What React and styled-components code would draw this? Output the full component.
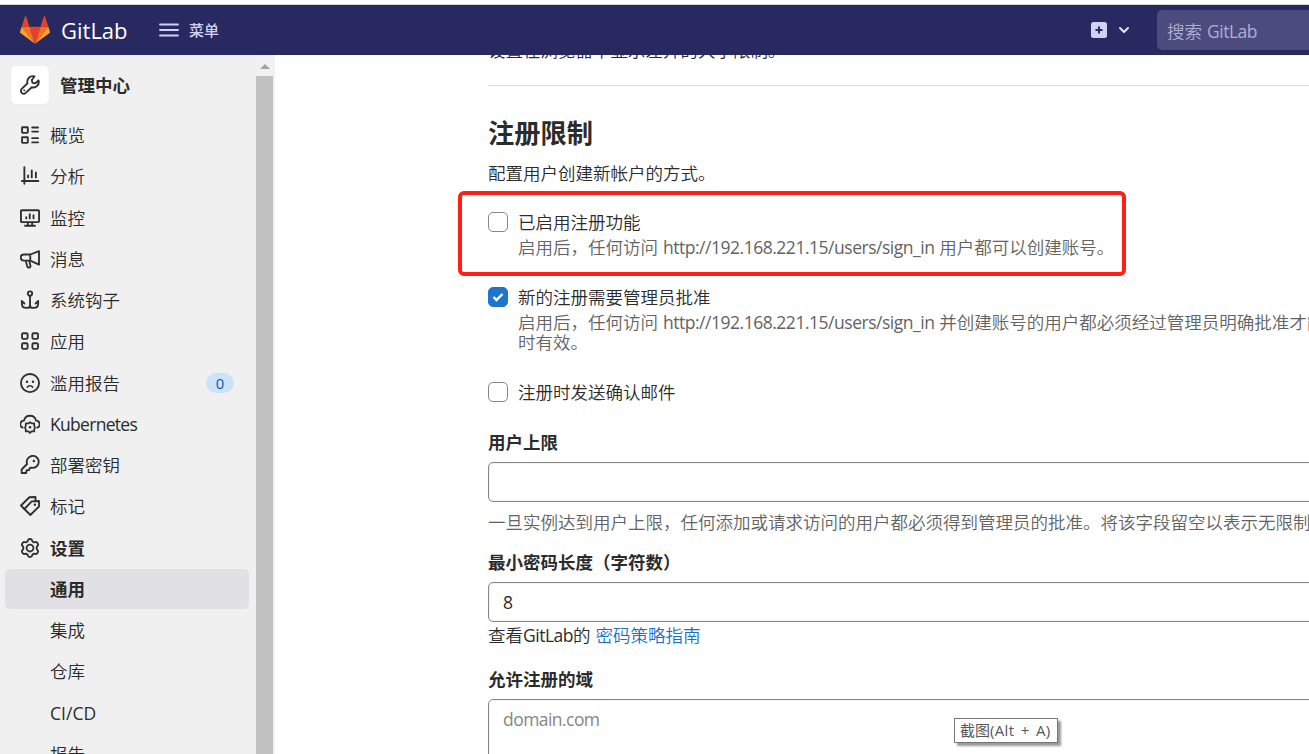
import React from "react";
import styled, { createGlobalStyle, css } from "styled-components";

const GlobalStyle = createGlobalStyle`
  *, *::before, *::after { box-sizing: border-box; }
  html, body { margin: 0; padding: 0; overflow: hidden; }
  body {
    background: #fff;
    color: #2b2b2b;
    font-family: "Open Sans", "Noto Sans CJK SC", sans-serif;
    font-size: 17.5px;
    font-weight: 350;
    line-height: 20px;
    word-spacing: 0.4px;
  }
`;

const Page = styled.div`
  display: flex;
  flex-direction: column;
  position: relative;
  width: 1309px;
  height: 754px;
  overflow: hidden;
`;

const Header = styled.header`
  display: flex;
  align-items: center;
  flex: none;
  height: 51px;
  margin-top: 4px;
  padding-left: 20px;
  background: #292961;
  border-top: 1px solid #d4d4d8;
  color: #d1d1f0;
`;

const Brand = styled.div`
  display: flex;
  align-items: center;
  gap: 11px;
  width: 139px;
  color: #fff;
  font-size: 22px;
  line-height: 30px;
  white-space: nowrap;
`;

const Menu = styled.div`
  display: flex;
  align-items: center;
  gap: 10px;
  flex: 1;
  font-size: 15px;
  font-weight: 500;
`;

const Create = styled.div`
  display: flex;
  align-items: center;
  gap: 11px;
  width: 66px;
`;

const Search = styled.div`
  flex: none;
  width: 152px;
  height: 40px;
  padding: 11px 0 0 10px;
  border-radius: 5px 0 0 5px;
  background: #4c4b7d;
  color: #aeaed2;
  white-space: nowrap;
`;

const Latin = styled.span`
  font-weight: 400;
  letter-spacing: ${(p) => p.$tracking || "-0.48px"};
`;

const Body = styled.div`
  display: flex;
  flex: 1;
  min-height: 0;
`;

const Sidebar = styled.aside`
  display: flex;
  flex: none;
  width: 275px;
  background: #f0f0f0;
  overflow: hidden;
`;

const Nav = styled.nav`
  width: 256px;
  flex: none;
`;

const Context = styled.div`
  display: flex;
  align-items: center;
  gap: 11px;
  height: 38px;
  margin: 11px 0 11px 11px;
  font-weight: 700;
`;

const ContextIcon = styled.div`
  display: grid;
  place-items: center;
  width: 38px;
  height: 38px;
  border-radius: 5px;
  background: #fff;
  box-shadow: 0 0 0 1px #ececec;
`;

const Item = styled.div`
  display: flex;
  align-items: center;
  gap: 10px;
  width: 244px;
  height: 40px;
  margin: 0 0 1.25px 5px;
  padding: 0 15px;
  border-radius: 5px;
  white-space: nowrap;
  ${(p) => p.$sub && css`padding-left: 45px;`}
  ${(p) => p.$bold && css`font-weight: 700;`}
  ${(p) => p.$active && css`background: #e1e0e5;`}
`;

const Badge = styled.span`
  margin-left: auto;
  width: 28px;
  height: 20px;
  border-radius: 10px;
  background: #cbe2f9;
  color: #0b5cad;
  font-size: 15px;
  font-weight: 400;
  text-align: center;
`;

const Scrollbar = styled.div`
  display: flex;
  flex-direction: column;
  align-items: center;
  width: 17px;
  background: #f1f1f1;
`;

const ArrowUp = styled.div`
  margin: 9px 0 7px;
  border: 5px solid transparent;
  border-top: 0;
  border-bottom-color: #a3a3a3;
`;

const Thumb = styled.div`
  width: 17px;
  flex: 1;
  background: #c1c1c1;
`;

const Content = styled.main`
  flex: 1;
  min-width: 0;
  padding-left: 213px;
  overflow: hidden;
  white-space: nowrap;
`;

const Previous = styled.div`
  display: flow-root;
  height: 31px;
  border-bottom: 1px solid #dbdbdb;

  p { margin: -15px 0 0; }
`;

const Title = styled.h4`
  margin: 32px 0 0;
  font-size: 26.25px;
  font-weight: 700;
  line-height: 30px;
`;

const Intro = styled.p`
  margin: 15px 0 29px;
`;

const Option = styled.div`
  display: flex;
  gap: 10px;
  height: ${(p) => p.$height}px;
`;

const Box = styled.span`
  display: grid;
  place-items: center;
  flex: none;
  width: 20px;
  height: 20px;
  border: 1px solid ${(p) => (p.$checked ? "#1f75cb" : "#868686")};
  border-radius: 5px;
  background: ${(p) => (p.$checked ? "#1f75cb" : "#fff")};
`;

const Help = styled.div`
  color: #636363;
  margin-top: ${(p) => p.$top || 0}px;
`;

const Label = styled.div`
  font-weight: 700;
  height: 20px;
  margin-bottom: 10px;
`;

const Field = styled.div`
  width: 1100px;
  height: ${(p) => p.$height || 40}px;
  padding: 9px 14px;
  border: 1px solid #868686;
  border-radius: 5px;
  box-shadow: inset 0 0 0 1px #f4f4f4;
  color: ${(p) => (p.$placeholder ? "#868686" : "#2b2b2b")};
`;

const Group = styled.div`
  margin-bottom: ${(p) => p.$gap}px;
`;

const Hint = styled.div`
  margin-top: 3px;
`;

const Link = styled.a`
  color: #1a70c6;
`;

const Highlight = styled.div`
  position: absolute;
  left: 458px;
  top: 191px;
  width: 668px;
  height: 85px;
  border: 4px solid #ff1f14;
  border-radius: 6px;
`;

const Tooltip = styled.div`
  position: absolute;
  left: 954px;
  top: 718px;
  width: 104px;
  height: 25px;
  padding-left: 5px;
  border: 1px solid #767676;
  background: #fff;
  box-shadow: 3px 3px 2px #9a9a9a;
  color: #575757;
  font-size: 15px;
  font-weight: 400;
  line-height: 23px;
  white-space: nowrap;
  word-spacing: 2px;
`;

const Svg = styled.svg`
  display: block;
  flex: none;
  fill: none;
  stroke: #303030;
  stroke-width: 1.5;
  stroke-linecap: round;
  stroke-linejoin: round;

  .solid { fill: #303030; stroke: none; }
`;

const shapes = {
  overview: (
    <>
      <rect x="1.65" y="1.75" width="4.6" height="4.5" rx=".4" />
      <rect x="1.65" y="9.75" width="4.6" height="4.5" rx=".4" />
      <path d="M9.75 2h4.7M9.75 5.25h4.7M9.75 10.5h4.7M9.75 13.9h4.7" />
    </>
  ),
  chart: <path d="M3.5 1v13.2M1.5 12h13.2M6.5 7.6v1.5M9.4 3.6v5.5M12.7 5.2v3.9" />,
  monitor: (
    <>
      <rect x=".75" y="1.75" width="14.5" height="9.5" rx=".7" />
      <path d="M5 7.3v1M7.8 4.9v3.4M10.8 5.7v2.6M6.3 11.5v2.5M9.7 11.5v2.5M4 14.2h8" />
    </>
  ),
  megaphone: (
    <path d="M8.2 4.4H3A2.45 2.45 0 0 0 3 9.3h5.2zM8.2 4.4l7-2.7v10.8l-7-3.2M4.6 9.5l1.2 4.4c.5 1.6 3 1.1 2.5-.6L7.4 9.5" />
  ),
  anchor: (
    <>
      <circle cx="8" cy="2.8" r="1.75" />
      <path d="M8 4.8v9.3M1.5 9.2v1.7C1.5 13.3 3 14.3 5 14.3c1.8 0 3-.7 3-2 0 1.3 1.2 2 3 2 2 0 3.5-1 3.5-3.4V9.2M1.4 8.8l2.1 2M14.6 8.8l-2.1 2" />
    </>
  ),
  apps: (
    <>
      <rect x="1.6" y="1.75" width="4.5" height="4.5" rx="1" />
      <rect x="9.9" y="1.75" width="4.5" height="4.5" rx="1" />
      <rect x="1.6" y="9.75" width="4.5" height="4.5" rx="1" />
      <rect x="9.9" y="9.75" width="4.5" height="4.5" rx="1" />
    </>
  ),
  sad: (
    <>
      <circle cx="8" cy="8" r="7.25" />
      <path d="M5.9 11.3c.7-1.5 3.5-1.5 4.2 0" strokeWidth="1.3" />
      <circle className="solid" cx="5.6" cy="7" r="1" />
      <circle className="solid" cx="10.4" cy="7" r="1" />
    </>
  ),
  kubernetes: (
    <>
      <path d="M2.1 10.9A2.9 2.9 0 0 1 3.2 5.3 4.9 4.9 0 0 1 12.8 5.3a2.9 2.9 0 0 1 1.1 5.6" />
      <path d="M8 6.6l1.2.9h2.2v2.1l.6 1.3-.6 1.3v1.7H9.2L8 15.2l-1.2-1.3H4.6v-1.7L4 10.9l.6-1.3V7.5h2.2z" strokeWidth="1.4" />
      <circle className="solid" cx="8" cy="10.6" r="1" />
    </>
  ),
  key: (
    <>
      <path d="M5.7 7.2A4.8 4.8 0 1 1 9.2 10.2L7.8 10.4 7.3 12 5.3 12.2 4.9 14.4H1.3V11.6z" />
      <circle className="solid" cx="11.1" cy="4.8" r="1" />
    </>
  ),
  label: (
    <>
      <path d="M8.3 15.2L3.5 10.4 9.4 4.3 15.2 4V8.4z" />
      <path d="M3.5 10.4L.8 7.6 7.5 1 12.4.8V3.8" />
      <circle className="solid" cx="11.9" cy="7" r="1" />
    </>
  ),
  settings: (
    <>
      <path d="M6.3 1.9C6.6.4 9.4.4 9.7 1.9l.2.8 1.4.8.9-.2c1.5-.5 3 1.9 1.9 3l-.7.8v1.8l.7.8c1.1 1.1-.4 3.5-1.9 3l-.9-.2-1.4.8-.2.8c-.3 1.5-3.1 1.5-3.4 0l-.2-.8-1.4-.8-.9.2c-1.5.5-3-1.9-1.9-3l.7-.8V7.1l-.7-.8c-1.1-1.1.4-3.5 1.9-3l.9.2 1.4-.8z" />
      <circle cx="8" cy="8" r="2.75" />
    </>
  ),
  wrench: (
    <path d="M11.6 1.2A4.4 4.4 0 0 0 6 6.6L1.4 11.1a2.2 2.2 0 0 0 3.2 3.2L9.4 9.8a4.4 4.4 0 0 0 5.4-5.5L12.2 6.7 10 6.3 9.4 4zM3.4 12.3h.01" />
  ),
};

const Icon = ({ name }) => (
  <Svg width="20" height="20" viewBox="0 0 16 16">{shapes[name]}</Svg>
);

const Tanuki = () => (
  <svg width="30" height="28" viewBox="0 0 30 28">
    <path fill="#e24329" d="M15 27.8L20.5 10.7h-11z" />
    <path fill="#fc6d26" d="M15 27.8L9.5 10.7H1.7z" />
    <path fill="#fca326" d="M1.7 10.7L.1 15.8c-.2.5 0 1 .4 1.3L15 27.8z" />
    <path fill="#e24329" d="M1.7 10.7h7.8L6.1.5C5.9 0 5.2 0 5 .5z" />
    <path fill="#fc6d26" d="M15 27.8l5.5-17.1h7.8z" />
    <path fill="#fca326" d="M28.3 10.7l1.6 5.1c.2.5 0 1-.4 1.3L15 27.8z" />
    <path fill="#e24329" d="M28.3 10.7h-7.8L23.9.5c.2-.5.9-.5 1.1 0z" />
  </svg>
);

const items = [
  { icon: "overview", text: "概览" },
  { icon: "chart", text: "分析" },
  { icon: "monitor", text: "监控" },
  { icon: "megaphone", text: "消息" },
  { icon: "anchor", text: "系统钩子" },
  { icon: "apps", text: "应用" },
  { icon: "sad", text: "滥用报告", badge: "0" },
  { icon: "kubernetes", text: <Latin $tracking="-0.7px">Kubernetes</Latin> },
  { icon: "key", text: "部署密钥" },
  { icon: "label", text: "标记" },
  { icon: "settings", text: "设置", bold: true },
  { text: "通用", bold: true, active: true },
  { text: "集成" },
  { text: "仓库" },
  { text: <Latin $tracking="0.05px">CI/CD</Latin> },
  { text: "报告" },
];

const SignInUrl = () => <Latin>http://192.168.221.15/users/sign_in</Latin>;

export default function App() {
  return (
    <Page>
      <GlobalStyle />
      <Header>
        <Brand><Tanuki /><Latin $tracking="0">GitLab</Latin></Brand>
        <Menu>
          <svg width="20" height="14" viewBox="0 0 20 14" stroke="currentColor" strokeWidth="1.8" strokeLinecap="round">
            <path d="M1 1.5h18M1 7h18M1 12.5h18" />
          </svg>
          <span>菜单</span>
        </Menu>
        <Create>
          <svg width="16" height="16" viewBox="0 0 16 16">
            <rect width="16" height="16" rx="2.5" fill="#d1d1f0" />
            <path d="M8 4.5v7M4.5 8h7" stroke="#292961" strokeWidth="2" />
          </svg>
          <svg width="12" height="8" viewBox="0 0 12 8" fill="none" stroke="#e4e4f8" strokeWidth="2" strokeLinecap="round" strokeLinejoin="round">
            <path d="M2 2l4 4 4-4" />
          </svg>
        </Create>
        <Search>搜索 <Latin>GitLab</Latin></Search>
      </Header>
      <Body>
        <Sidebar>
          <Nav>
            <Context>
              <ContextIcon><Icon name="wrench" /></ContextIcon>
              管理中心
            </Context>
            {items.map((it, i) => (
              <Item key={i} $sub={!it.icon} $bold={it.bold} $active={it.active}>
                {it.icon && <Icon name={it.icon} />}
                <span>{it.text}</span>
                {it.badge && <Badge>{it.badge}</Badge>}
              </Item>
            ))}
          </Nav>
          <Scrollbar><ArrowUp /><Thumb /></Scrollbar>
        </Sidebar>
        <Content>
          <Previous><p>设置在浏览器中显示差异的大小限制。</p></Previous>
          <Title>注册限制</Title>
          <Intro>配置用户创建新帐户的方式。</Intro>
          <Option $height={75}>
            <Box />
            <div>
              <div>已启用注册功能</div>
              <Help $top={5}>启用后，任何访问 <SignInUrl /> 用户都可以创建账号。</Help>
            </div>
          </Option>
          <Option $height={95}>
            <Box $checked>
              <svg width="12" height="10" viewBox="0 0 12 10" fill="none" stroke="#fff" strokeWidth="2.4">
                <path d="M1.5 5l3 3 6-6" />
              </svg>
            </Box>
            <div>
              <div>新的注册需要管理员批准</div>
              <Help $top={5}>
                启用后，任何访问 <SignInUrl /> 并创建账号的用户都必须经过管理员明确批准才能<br />时有效。
              </Help>
            </div>
          </Option>
          <Option $height={50}>
            <Box />
            <div>注册时发送确认邮件</div>
          </Option>
          <Group $gap={20}>
            <Label>用户上限</Label>
            <Field />
            <Help $top={10}>一旦实例达到用户上限，任何添加或请求访问的用户都必须得到管理员的批准。将该字段留空以表示无限制</Help>
          </Group>
          <Group $gap={24}>
            <Label>最小密码长度（字符数）</Label>
            <Field><Latin>8</Latin></Field>
            <Hint>查看<Latin>GitLab</Latin>的 <Link>密码策略指南</Link></Hint>
          </Group>
          <Label>允许注册的域</Label>
          <Field $height={100} $placeholder><Latin $tracking="-0.55px">domain.com</Latin></Field>
        </Content>
      </Body>
      <Highlight />
      <Tooltip>截图<Latin $tracking="0.35px">(Alt + A)</Latin></Tooltip>
    </Page>
  );
}
